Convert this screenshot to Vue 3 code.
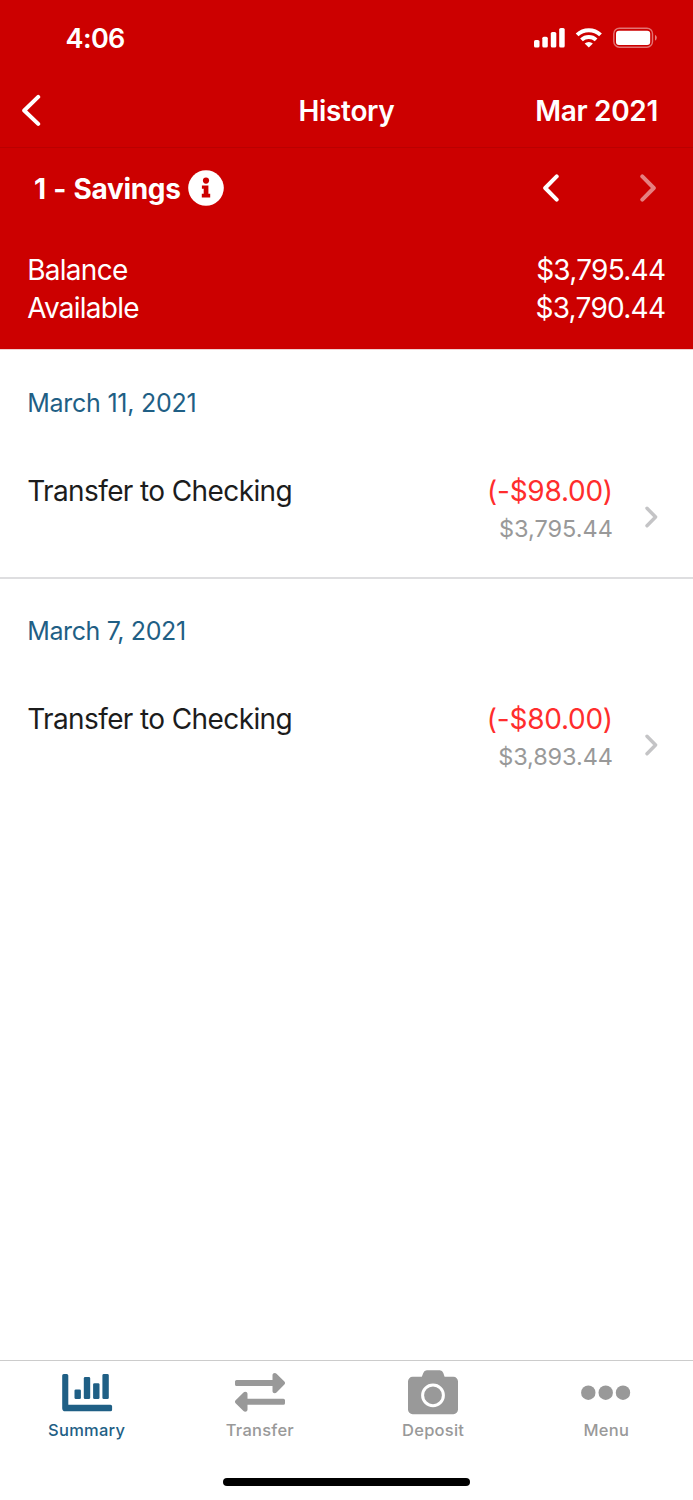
<script setup>
const groups = [
  { date: 'March 11, 2021', id: 'first', name: 'Transfer to Checking', amount: '(-$98.00)', balance: '$3,795.44' },
  { date: 'March 7, 2021', id: 'second', name: 'Transfer to Checking', amount: '(-$80.00)', balance: '$3,893.44' },
]
</script>

<template>
  <div class="screen">
    <header class="header">
      <div class="status">
        <span class="clock">4:06</span>
        <svg class="status-icons" width="124" height="22" viewBox="0 0 124 22">
          <g fill="#fff">
            <rect x="1" y="13" width="5.5" height="7.5" rx="1.6" />
            <rect x="9.3" y="9.7" width="5.5" height="10.8" rx="1.6" />
            <rect x="17.8" y="5" width="5.5" height="15.5" rx="1.6" />
            <rect x="26.2" y="1" width="5.5" height="19.5" rx="1.6" />
          </g>
          <g fill="none" stroke="#fff" stroke-width="4">
            <path d="M44.1 7.9a17 17 0 0 1 23.4 0" />
            <path d="M48.5 12.9a10.8 10.8 0 0 1 14.6 0" />
          </g>
          <path d="M55.8 20.6l-4.1-4.1a6 6 0 0 1 8.2 0z" fill="#fff" />
          <rect x="80.8" y="1.2" width="38.7" height="19" rx="5.6" fill="none" stroke="#fff" stroke-opacity=".45" stroke-width="1.4" />
          <rect x="83" y="3.7" width="34.2" height="14.2" rx="3" fill="#fff" />
          <path d="M122 7.7q1.8.9 1.8 3t-1.8 3z" fill="#fff" fill-opacity=".5" />
        </svg>
      </div>
      <div class="nav">
        <svg class="back" width="20" height="33" viewBox="0 0 20 33"><path d="M17.2 2.9L3.2 16.5l14 13.4" /></svg>
        <h1 class="title">History</h1>
        <span class="month">Mar 2021</span>
      </div>
      <div class="account">
        <span class="account-name">1 - Savings</span>
        <svg class="info" width="36" height="36" viewBox="0 0 36 36">
          <circle cx="18" cy="18" r="17.8" fill="#fff" />
          <circle cx="18" cy="10.6" r="3.1" fill="#c00" />
          <path d="M13.9 15.4h6.5v8.4h1.8v3.6h-8.4v-3.6h1.9v-5h-1.8z" fill="#c00" />
        </svg>
        <svg class="prev" width="16" height="28" viewBox="0 0 16 28"><path d="M13.7 2.4L2.2 14l11.5 11.6" /></svg>
        <svg class="next" width="16" height="28" viewBox="0 0 16 28"><path d="M2.3 2.4L13.8 14 2.3 25.6" /></svg>
      </div>
      <dl class="totals">
        <dt>Balance</dt><dd>$3,795.44</dd>
        <dt>Available</dt><dd>$3,790.44</dd>
      </dl>
    </header>
    <main class="list">
      <section v-for="g in groups" :key="g.id" class="group" :class="g.id">
        <h2 class="date">{{ g.date }}</h2>
        <div class="entry">
          <div class="name">{{ g.name }}</div>
          <div class="figures">
            <div class="amount">{{ g.amount }}</div>
            <div class="running">{{ g.balance }}</div>
          </div>
          <svg class="more" width="13" height="22" viewBox="0 0 13 22"><path d="M2 2.2l8.6 8.8L2 19.8" /></svg>
        </div>
      </section>
    </main>
    <nav class="tabs">
      <div class="tab active">
        <svg width="52" height="46" viewBox="0 0 52 46" fill="currentColor">
          <path d="M2.8 4h2.9a1.6 1.6 0 0 1 1.6 1.6v29.1h42.2a1.6 1.6 0 0 1 1.6 1.6v3.4a1.6 1.6 0 0 1-1.6 1.6H4.3a3.1 3.1 0 0 1-3.1-3.1V5.6A1.6 1.6 0 0 1 2.8 4z" />
          <rect x="13.5" y="19.4" width="6.4" height="9.7" rx="1.4" /><rect x="22.8" y="7" width="6.4" height="22.1" rx="1.4" />
          <rect x="32.1" y="13.2" width="6.4" height="15.9" rx="1.4" /><rect x="41.4" y="4" width="6.4" height="25.1" rx="1.4" />
        </svg>
        <span>Summary</span>
      </div>
      <div class="tab">
        <svg width="52" height="46" viewBox="0 0 52 46" fill="currentColor">
          <path id="arrow" d="M2.6 10h35.9V5.2c0-2.2 2.6-3 4-1.5l7.9 7.8q1.3 1.5 0 3.1l-7.9 7.8c-1.5 1.5-4 .6-4-1.5v-4.8H2.6a1.6 1.6 0 0 1-1.6-1.6v-2.9A1.6 1.6 0 0 1 2.6 10z" />
          <use href="#arrow" transform="rotate(180 26 22.4)" />
        </svg>
        <span>Transfer</span>
      </div>
      <div class="tab">
        <svg width="52" height="46" viewBox="0 0 52 46" fill="currentColor">
          <path d="M5.6 6.8h9.2l1.5-3.9Q17.2.3 19.8.3h13q2.6 0 3.5 2.6l1.3 3.9h8.8a4.6 4.6 0 0 1 4.6 4.6v28.2a4.6 4.6 0 0 1-4.6 4.6H5.6A4.6 4.6 0 0 1 1 39.6V11.4a4.6 4.6 0 0 1 4.6-4.6z" />
          <circle cx="26" cy="25.3" r="10.4" fill="none" stroke="#fff" stroke-width="3" />
        </svg>
        <span>Deposit</span>
      </div>
      <div class="tab">
        <svg width="52" height="46" viewBox="0 0 52 46" fill="currentColor">
          <circle cx="8.3" cy="22.7" r="7.2" /><circle cx="25.7" cy="22.7" r="7.2" /><circle cx="43" cy="22.7" r="7.2" />
        </svg>
        <span>Menu</span>
      </div>
      <div class="home"></div>
    </nav>
  </div>
</template>

<style>
body { margin: 0; background: #fff; }
</style>
<style scoped>
.screen { width: 693px; height: 1500px; display: flex; flex-direction: column; overflow: hidden; font-family: Inter, "Liberation Sans", sans-serif; font-size: 28px; color: #1c1c1c; background: #fff; white-space: nowrap; }
.header { background: #c00; color: #fff; height: 350px; box-sizing: border-box; border-bottom: 1px solid #f0d0d0; }
.status { height: 74px; display: flex; justify-content: space-between; box-sizing: border-box; padding: 27px 36px 0 65.6px; }
.clock { font-size: 27px; line-height: 24px; font-weight: 600; letter-spacing: -0.65px; }
.nav { height: 74px; box-sizing: border-box; display: grid; grid-template-columns: 1fr auto 1fr; align-items: center; padding: 0 35px; border-bottom: 1px solid #ba0000; }
.title { margin: 0; font-size: 28px; font-weight: 600; letter-spacing: -0.35px; }
.month { justify-self: end; font-weight: 600; letter-spacing: -0.32px; }
svg { display: block; flex: none; }
.back path, .prev path, .next path, .more path { fill: none; stroke: #fff; stroke-width: 4; stroke-linecap: round; stroke-linejoin: round; }
.back { margin-left: -14.3px; }
.account { height: 80px; display: flex; align-items: center; padding: 0 37.4px 0 34px; }
.account-name { font-weight: 700; letter-spacing: -0.3px; word-spacing: 1.1px; line-height: 34px; padding-top: 1px; }
.info { margin-left: 7.2px; }
.prev { margin-left: auto; }
.next { margin-left: 80.6px; opacity: .5; }
.totals { margin: 24.4px 27.7px 0 27.2px; display: grid; grid-template-columns: 1fr auto; line-height: 37.6px; letter-spacing: -0.73px; }
.totals dd { margin: 0; text-align: right; }
.group { box-sizing: border-box; padding: 37px 35px 0 27.2px; }
.first { height: 229px; border-bottom: 2px solid #dedee0; letter-spacing: -0.25px; }
.second { padding-top: 36px; letter-spacing: -0.37px; }
.date { margin: 0; font-size: 25px; line-height: 32px; font-weight: 400; color: #1f5f85; }
.entry { display: flex; margin-top: 54px; line-height: 37px; }
.second .entry { margin-top: 53.6px; }
.name { flex: 1; letter-spacing: -0.61px; }
.figures { text-align: right; }
.amount { color: #ff2d2d; letter-spacing: -0.25px; }
.running { font-size: 23.5px; color: #999; letter-spacing: 0; }
.second .running { letter-spacing: -0.1px; }
.more { margin: 33px 0 0 32.2px; }
.more path { stroke: #c4c4c6; stroke-width: 3.4; }
.tabs { margin-top: auto; height: 140px; box-sizing: border-box; border-top: 1px solid #ccc; display: grid; grid-template-columns: repeat(4, 1fr); position: relative; color: #999; font-size: 16.5px; font-weight: 500; letter-spacing: 0.25px; }
.tab { display: flex; flex-direction: column; align-items: center; padding-top: 9px; line-height: 20px; gap: 4px; }
.active { color: #1f5f85; }
.home { position: absolute; left: 222.7px; bottom: 14px; width: 247.3px; height: 8px; border-radius: 4px; background: #000; }
</style>
